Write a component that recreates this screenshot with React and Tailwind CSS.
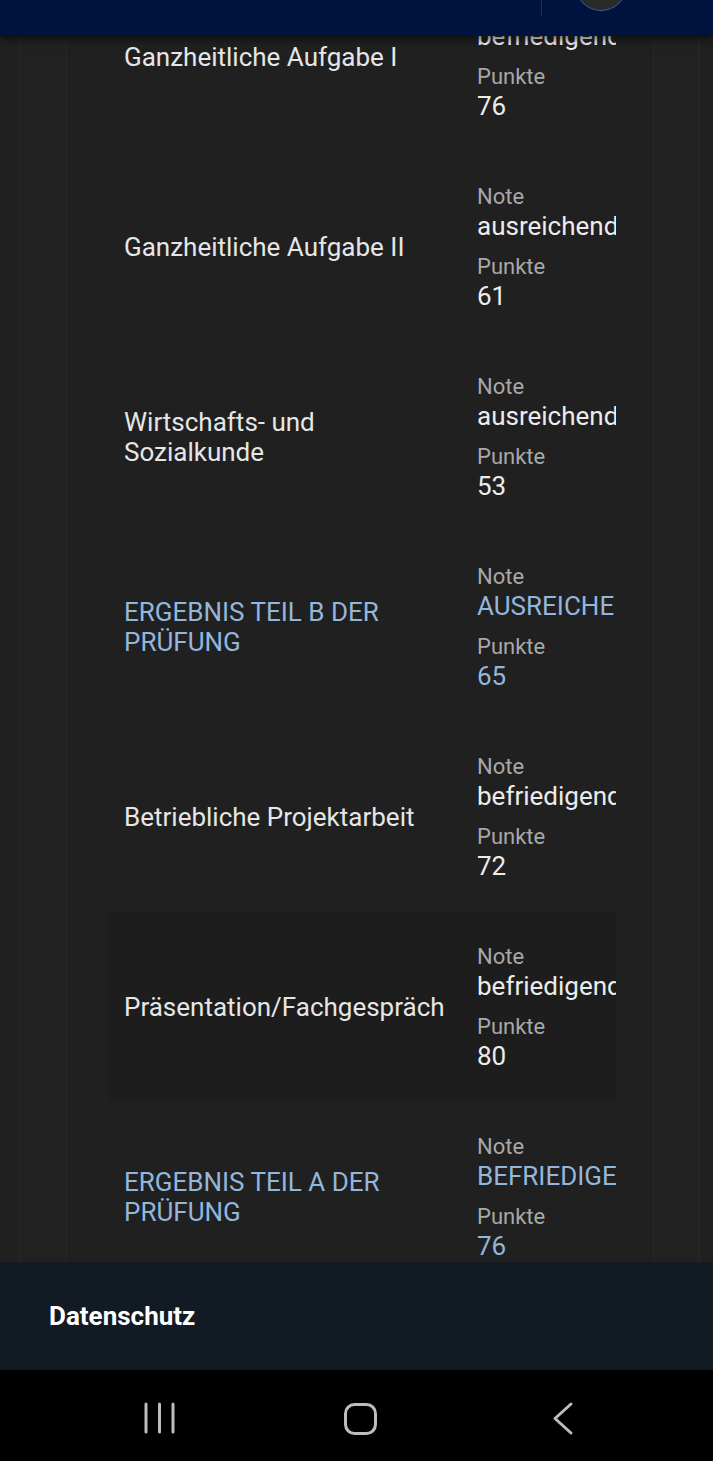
import React from "react";

const rows = [
  { name: "Ganzheitliche Aufgabe I", note: "befriedigend", punkte: "76" },
  { name: "Ganzheitliche Aufgabe II", note: "ausreichend", punkte: "61" },
  { name: "Wirtschafts- und Sozialkunde", note: "ausreichend", punkte: "53" },
  { name: "ERGEBNIS TEIL B DER PRÜFUNG", note: "AUSREICHEND", punkte: "65", total: true },
  { name: "Betriebliche Projektarbeit", note: "befriedigend", punkte: "72" },
  { name: "Präsentation/Fachgespräch", note: "befriedigend", punkte: "80", active: true },
  { name: "ERGEBNIS TEIL A DER PRÜFUNG", note: "BEFRIEDIGEND", punkte: "76", total: true },
];

function Row({ r }) {
  const valueColor = r.total ? "text-[#93b6dc]" : "text-[#ececec]";
  return (
    <div
      className={`flex h-[190px] items-center pl-[15px] ${
        r.active ? "bg-[#1d1d1d]" : ""
      }`}
    >
      <div
        className={`flex-1 pr-4 text-[26px] leading-[30px] ${
          r.total ? "text-[#93b6dc]" : "text-[#e6e6e6]"
        }`}
      >
        {r.name}
      </div>
      <div className="w-[139px] overflow-hidden whitespace-nowrap">
        <div className="text-[22px] leading-[28px] text-[#a8a8a8]">Note</div>
        <div className={`text-[26px] leading-[30px] ${valueColor}`}>{r.note}</div>
        <div className="mt-3 text-[22px] leading-[28px] text-[#a8a8a8]">Punkte</div>
        <div className={`text-[26px] leading-[30px] ${valueColor}`}>{r.punkte}</div>
      </div>
    </div>
  );
}

export default function App() {
  return (
    <div
      className="relative flex h-[1461px] w-[713px] flex-col overflow-hidden bg-[#202020]"
      style={{ fontFamily: "Roboto, 'Noto Sans', sans-serif" }}
    >
      <main className="relative h-[1262px] shrink-0 overflow-hidden">
        <div className="ml-[19px] mr-[13px] h-[1262px] border-x border-[#2a2a2a] bg-[#212121]">
          <div className="ml-[46px] mr-[45px] flow-root h-[1262px] border-x border-[#262626] bg-[#202020]">
            <div className="-mt-[38px] ml-[42px] mr-[37px]">
              {rows.map((r) => (
                <Row key={r.name} r={r} />
              ))}
            </div>
          </div>
        </div>

        <header className="absolute left-0 right-0 top-0 h-[36px] bg-[#00123e] shadow-[0_3px_8px_rgba(0,0,0,0.6)]">
          <div className="absolute left-[541px] top-0 h-[16px] w-px bg-[#1e2d58]" />
          <div className="absolute left-[575px] top-[-41px] h-[52px] w-[52px] rounded-full border border-[#3b5d8f] bg-[#2a2a2a]" />
        </header>
      </main>

      <footer className="flex h-[108px] shrink-0 items-center bg-[#121a24] px-[49px]">
        <span className="text-[26px] font-bold text-white">Datenschutz</span>
      </footer>

      <nav className="h-[91px] shrink-0 bg-black">
        <svg width="713" height="91" viewBox="0 0 713 91" fill="none" stroke="#bdbdbd" strokeLinecap="round">
          <path d="M146 34v28M159.5 34v28M173 34v28" strokeWidth="3" />
          <rect x="345.5" y="34.5" width="30" height="29" rx="9" strokeWidth="3" />
          <path d="M571 34L555 48.5L571 63" strokeWidth="3" strokeLinejoin="round" />
        </svg>
      </nav>
    </div>
  );
}
